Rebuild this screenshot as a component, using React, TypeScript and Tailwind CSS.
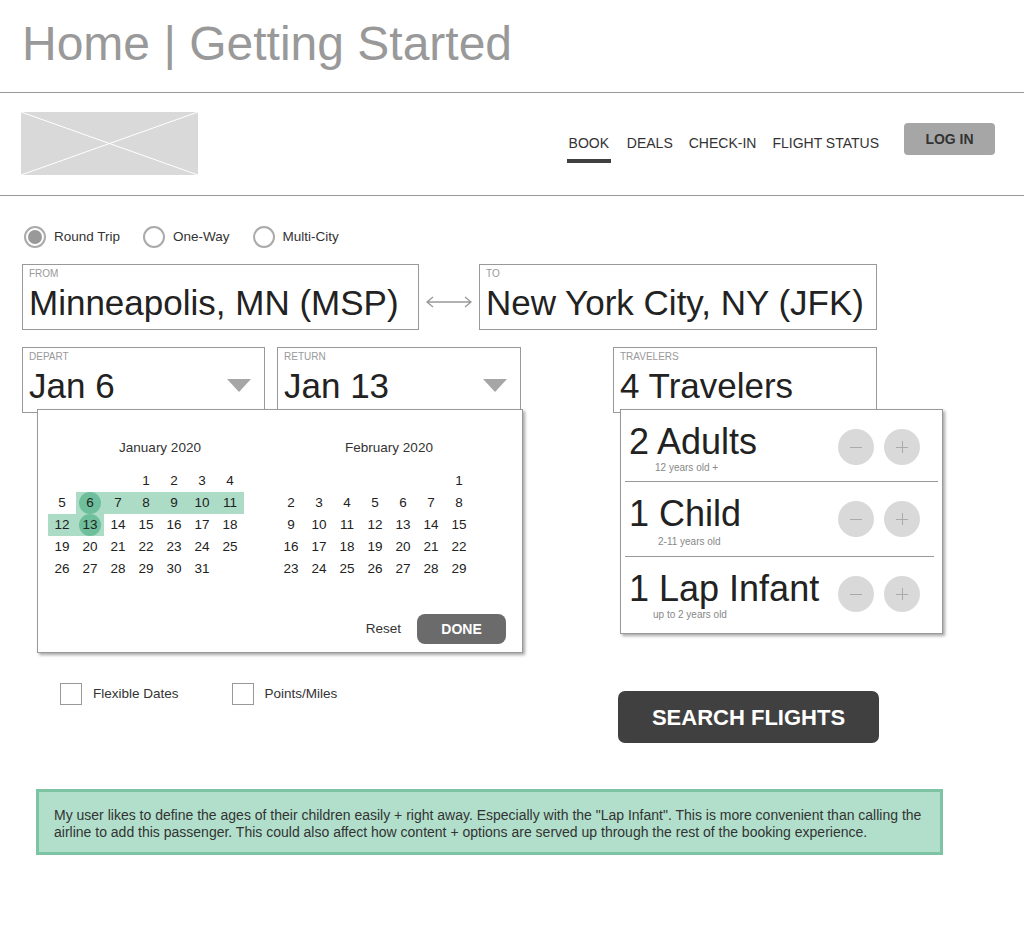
import React from "react";

const janWeeks: (number | null)[][] = [
  [null, null, null, 1, 2, 3, 4],
  [5, 6, 7, 8, 9, 10, 11],
  [12, 13, 14, 15, 16, 17, 18],
  [19, 20, 21, 22, 23, 24, 25],
  [26, 27, 28, 29, 30, 31, null],
];

const febWeeks: (number | null)[][] = [
  [null, null, null, null, null, null, 1],
  [2, 3, 4, 5, 6, 7, 8],
  [9, 10, 11, 12, 13, 14, 15],
  [16, 17, 18, 19, 20, 21, 22],
  [23, 24, 25, 26, 27, 28, 29],
];

function Month({ title, weeks, range }: { title: string; weeks: (number | null)[][]; range?: boolean }) {
  return (
    <div className="flex w-[196px] flex-col">
      <div className="h-[26px] pl-[28px] text-center text-[13.5px] text-[#333]">{title}</div>
      <div className="mt-[6px] grid grid-cols-7">
        {weeks.flat().map((d, i) => {
          const inRange = range && d !== null && d >= 6 && d <= 13;
          const edge = range && (d === 6 || d === 13);
          return (
            <div
              key={i}
              className={`relative flex h-[22px] items-center justify-center text-[13.5px] text-[#222] ${inRange ? "bg-[#acdcc6]" : ""}`}
            >
              {edge && <span className="absolute left-[3px] top-0 size-[22px] rounded-full bg-[#6fbf9c]" />}
              <span className="relative">{d ?? ""}</span>
            </div>
          );
        })}
      </div>
    </div>
  );
}

function Field({ label, value, className, caret }: { label: string; value: string; className: string; caret?: boolean }) {
  return (
    <div className={`relative flex h-[66px] flex-col border border-[#999] px-[6px] ${className}`}>
      <span className="mt-[3px] text-[10px] leading-[12px] text-[#999]">{label}</span>
      <div className="flex items-center justify-between">
        <span className="whitespace-nowrap text-[35px] leading-[46px] text-[#222]">{value}</span>
        {caret && (
          <svg width="24" height="14" viewBox="0 0 24 14" className="mr-[7px]">
            <polygon points="0,0 24,0 12,13" fill="#a6a6a6" />
          </svg>
        )}
      </div>
    </div>
  );
}

function Radio({ label, checked }: { label: string; checked?: boolean }) {
  return (
    <div className="flex items-center gap-[8px]">
      <span className="flex size-[22px] items-center justify-center rounded-full border-2 border-[#aaa]">
        {checked && <span className="size-[14px] rounded-full bg-[#999]" />}
      </span>
      <span className="text-[13.5px] text-[#333]">{label}</span>
    </div>
  );
}

function Counter() {
  return (
    <div className="flex gap-[10px]">
      <span className="flex size-[36px] items-center justify-center rounded-full bg-[#d9d9d9]">
        <span className="h-px w-[12px] bg-[#aaa]" />
      </span>
      <span className="relative flex size-[36px] items-center justify-center rounded-full bg-[#d9d9d9]">
        <span className="h-px w-[12px] bg-[#aaa]" />
        <span className="absolute h-[12px] w-px bg-[#aaa]" />
      </span>
    </div>
  );
}

function TravelerRow({ big, small, indent }: { big: string; small: string; indent: string }) {
  return (
    <div className="mx-[4px] flex items-start justify-between">
      <div className="flex flex-col pl-[4px]">
        <span className="text-[36px] leading-[40px] text-[#222]">{big}</span>
        <span className={`text-[10px] leading-[12px] text-[#888] ${indent}`}>{small}</span>
      </div>
      <div className="mr-[18px] mt-[7px]">
        <Counter />
      </div>
    </div>
  );
}

export default function App() {
  return (
    <div className="h-[933px] w-[1024px] bg-white font-['Liberation_Sans',Arial,sans-serif]">
      <header className="h-[93px] border-b border-[#999] px-[22px] pt-[20px] text-[48px] leading-none text-[#999]">
        Home | Getting Started
      </header>

      <nav className="flex h-[103px] items-start border-b border-[#999]">
        <svg width="177" height="63" viewBox="0 0 177 63" className="ml-[21px] mt-[19px]">
          <rect width="177" height="63" fill="#d9d9d9" />
          <line x1="0" y1="0" x2="177" y2="63" stroke="#fff" strokeWidth="1" />
          <line x1="0" y1="63" x2="177" y2="0" stroke="#fff" strokeWidth="1" />
        </svg>
        <div className="ml-auto mr-[29px] mt-[30px] flex items-start">
          <div className="mt-[10px] flex gap-[16px] text-[14px] text-[#333]">
            <div className="flex flex-col items-center">
              <span>BOOK</span>
              <span className="mt-[5px] h-[4px] w-[44px] bg-[#404040]" />
            </div>
            <span>DEALS</span>
            <span>CHECK-IN</span>
            <span>FLIGHT STATUS</span>
          </div>
          <button className="ml-[25px] h-[32px] w-[91px] rounded-[4px] bg-[#a6a6a6] text-[14px] font-bold text-[#333]">
            LOG IN
          </button>
        </div>
      </nav>

      <main className="px-[22px]">
        <div className="mt-[30px] flex gap-[23px] pl-[2px]">
          <Radio label="Round Trip" checked />
          <Radio label="One-Way" />
          <Radio label="Multi-City" />
        </div>

        <div className="mt-[16px] flex items-center">
          <Field label="FROM" value="Minneapolis, MN (MSP)" className="w-[397px]" />
          <svg width="48" height="12" viewBox="0 0 48 12" className="mx-[6px] mt-[10px]">
            <path d="M2 6 H46 M8 1 L2 6 L8 11 M40 1 L46 6 L40 11" stroke="#999" strokeWidth="1.3" fill="none" />
          </svg>
          <Field label="TO" value="New York City, NY (JFK)" className="w-[398px]" />
        </div>

        <div className="relative mt-[17px] flex">
          <Field label="DEPART" value="Jan 6" caret className="w-[243px]" />
          <Field label="RETURN" value="Jan 13" caret className="ml-[12px] w-[244px]" />
          <Field label="TRAVELERS" value="4 Travelers" className="ml-[92px] w-[264px]" />

          <div className="absolute left-[15px] top-[62px] flex h-[244px] w-[486px] flex-col border border-[#999] bg-white pl-[10px] pt-[28px] shadow-[2px_2px_3px_rgba(0,0,0,0.35)]">
            <div className="flex gap-[33px]">
              <Month title="January 2020" weeks={janWeeks} range />
              <Month title="February 2020" weeks={febWeeks} />
            </div>
            <div className="mr-[16px] mt-[34px] flex items-center justify-end gap-[16px]">
              <span className="text-[13.5px] text-[#333]">Reset</span>
              <button className="h-[30px] w-[89px] rounded-[8px] bg-[#6b6b6b] text-[14px] font-bold text-white">DONE</button>
            </div>
          </div>

          <div className="absolute left-[598px] top-[62px] flex h-[225px] w-[323px] flex-col border border-[#999] bg-white pt-[12px] shadow-[2px_2px_3px_rgba(0,0,0,0.35)]">
            <TravelerRow big="2 Adults" small="12 years old +" indent="pl-[26px]" />
            <div className="mx-[4px] mt-[7px] h-px bg-[#999]" />
            <div className="pt-[12px]">
              <TravelerRow big="1 Child" small="2-11 years old" indent="pl-[29px] pt-[2px]" />
            </div>
            <div className="mx-[4px] mr-[8px] mt-[8px] h-px bg-[#999]" />
            <div className="pt-[12px]">
              <TravelerRow big="1 Lap Infant" small="up to 2 years old" indent="pl-[24px]" />
            </div>
          </div>
        </div>

        <div className="mt-[270px] flex items-start">
          <div className="ml-[38px] flex items-center gap-[11px]">
            <span className="size-[22px] border border-[#999]" />
            <span className="text-[13.5px] text-[#333]">Flexible Dates</span>
          </div>
          <div className="ml-[53px] flex items-center gap-[11px]">
            <span className="size-[22px] border border-[#999]" />
            <span className="text-[13.5px] text-[#333]">Points/Miles</span>
          </div>
          <button className="ml-auto mr-[123px] mt-[8px] h-[52px] w-[261px] rounded-[7px] bg-[#404040] text-[22px] font-bold text-white">
            SEARCH FLIGHTS
          </button>
        </div>

        <div className="ml-[14px] mt-[46px] flex h-[66px] w-[907px] flex-col border-[3px] border-[#7dc4a5] bg-[#b1dfcb] px-[15px] pt-[15px] text-[14px] leading-[17px] text-[#333]">
          <span className="whitespace-nowrap">
            My user likes to define the ages of their children easily + right away. Especially with the "Lap Infant". This is more convenient than calling the
          </span>
          <span className="whitespace-nowrap">
            airline to add this passenger. This could also affect how content + options are served up through the rest of the booking experience.
          </span>
        </div>
      </main>
    </div>
  );
}
